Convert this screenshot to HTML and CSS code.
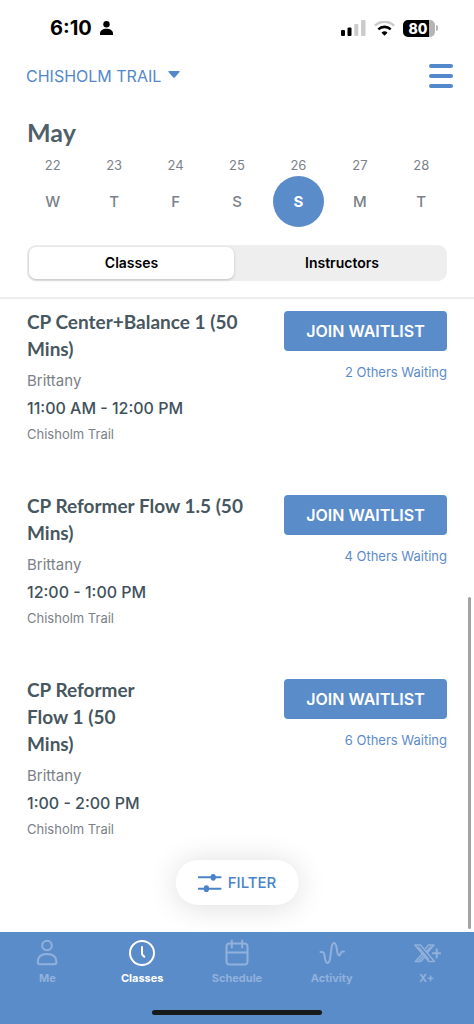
FILE: index.html
```html
<!DOCTYPE html>
<html lang="en">
<head>
<meta charset="utf-8">
<meta name="viewport" content="width=device-width, initial-scale=1">
<title>Classes</title>
<link rel="stylesheet" href="styles.css">
</head>
<body>
<div class="app">
  <div class="status">
    <div class="status-left">
      <span class="clock">6:10</span>
      <svg width="13" height="14" viewBox="0 0 13 14" fill="currentColor" aria-hidden="true"><circle cx="6.5" cy="3.3" r="3.2"/><path d="M0 14V12.500C0 9.500 2.800 7.800 6.500 7.800S13 9.500 13 12.500V14Z"/></svg>
    </div>
    <div class="status-right">
      <svg width="25" height="16" viewBox="0 0 25 16" aria-hidden="true"><rect x="0" y="10" width="4" height="6" rx="1"/><rect x="6.500" y="7.500" width="4" height="8.500" rx="1"/><g fill="#cbcbcb"><rect x="13.300" y="4" width="4" height="12" rx="1"/><rect x="20" y="0" width="4.500" height="16" rx="1"/></g></svg>
      <svg width="21" height="15" viewBox="0 0 21 15" fill="none" stroke-width="2.600" aria-hidden="true"><path d="M1 4.700A13.500 13.500 0 0 1 20 4.700" stroke="#cbcbcb"/><path d="M4.300 8.400A9 9 0 0 1 16.700 8.400" stroke="#000"/><path d="M10.500 14.800 7.500 11.700A4.300 4.300 0 0 1 13.500 11.700Z" fill="#000"/></svg>
      <span class="battery"><span class="battery-level">80</span></span>
    </div>
  </div>

  <header class="topbar">
    <button class="location" type="button">CHISHOLM TRAIL
      <svg width="12" height="10" viewBox="0 0 12 10" fill="currentColor" aria-hidden="true"><path d="M1 0H11Q12.300 0 11.500 1L7 6.300Q6 7.300 5 6.300L.5 1Q-.3 0 1 0Z"/></svg>
    </button>
    <button class="menu" type="button" aria-label="Menu"><span></span><span></span><span></span></button>
  </header>

  <section class="calendar">
    <h1 class="month">May</h1>
    <div class="days">
      <button class="day" type="button"><span class="date">22</span><span class="weekday">W</span></button>
      <button class="day" type="button"><span class="date">23</span><span class="weekday">T</span></button>
      <button class="day" type="button"><span class="date">24</span><span class="weekday">F</span></button>
      <button class="day" type="button"><span class="date">25</span><span class="weekday">S</span></button>
      <button class="day selected" type="button"><span class="date">26</span><span class="weekday">S</span></button>
      <button class="day" type="button"><span class="date">27</span><span class="weekday">M</span></button>
      <button class="day" type="button"><span class="date">28</span><span class="weekday">T</span></button>
    </div>
    <div class="segments">
      <button class="segment active" type="button">Classes</button>
      <button class="segment" type="button">Instructors</button>
    </div>
  </section>

  <main class="classes">
    <article class="class">
      <div class="info">
        <h2 class="title">CP Center+Balance 1 (50<br>Mins)</h2>
        <p class="teacher">Brittany</p>
        <p class="time">11:00 AM - 12:00 PM</p>
        <p class="place">Chisholm Trail</p>
      </div>
      <div class="booking">
        <button class="join" type="button">JOIN WAITLIST</button>
        <p class="waiting">2 Others Waiting</p>
      </div>
    </article>
    <article class="class">
      <div class="info">
        <h2 class="title">CP Reformer Flow 1.5 (50<br>Mins)</h2>
        <p class="teacher">Brittany</p>
        <p class="time">12:00 - 1:00 PM</p>
        <p class="place">Chisholm Trail</p>
      </div>
      <div class="booking">
        <button class="join" type="button">JOIN WAITLIST</button>
        <p class="waiting">4 Others Waiting</p>
      </div>
    </article>
    <article class="class">
      <div class="info">
        <h2 class="title">CP Reformer<br>Flow 1 (50<br>Mins)</h2>
        <p class="teacher">Brittany</p>
        <p class="time">1:00 - 2:00 PM</p>
        <p class="place">Chisholm Trail</p>
      </div>
      <div class="booking">
        <button class="join" type="button">JOIN WAITLIST</button>
        <p class="waiting">6 Others Waiting</p>
      </div>
    </article>
    <div class="scroll-thumb"></div>
    <button class="filter" type="button">
      <svg width="24" height="20" viewBox="0 0 24 20" aria-hidden="true"><path d="M1 4.300H23M1 15.700H23" stroke="currentColor" stroke-width="2" stroke-linecap="round"/><ellipse cx="15.500" cy="4.300" rx="2.700" ry="3.400" fill="currentColor"/><ellipse cx="8.700" cy="15.700" rx="2.700" ry="3.400" fill="currentColor"/></svg>
      FILTER
    </button>
  </main>

  <nav class="tabs">
    <div class="tab-row">
      <a class="tab" href="#me">
        <svg viewBox="0 0 28 28" aria-hidden="true"><circle cx="14" cy="7.500" r="4.800"/><path d="M4.800 24C4.800 19 8 16 14 16S23.400 19 23.400 24Q23.400 26.300 21 26.300H7.200Q4.800 26.300 4.800 24Z"/></svg>
        Me</a>
      <a class="tab current" href="#classes" aria-current="page">
        <svg viewBox="0 0 28 28" aria-hidden="true"><circle cx="14" cy="15" r="12"/><path d="M14 9V15.300Q14 16.500 14.800 17.300L16.300 18.800"/></svg>
        Classes</a>
      <a class="tab" href="#schedule">
        <svg viewBox="0 0 28 28" aria-hidden="true"><rect x="3.500" y="5.500" width="21" height="21" rx="3"/><path d="M3.500 14.500H24.500M8.800 2.500V9.500M19.200 2.500V9.500"/></svg>
        Schedule</a>
      <a class="tab" href="#activity">
        <svg viewBox="0 0 28 28" aria-hidden="true"><path d="M2.500 14H4.500C8 14 5.500 25 9.500 25C14 25 11.800 5 16 5C20 5 18 17.500 21 17.500C23 17.500 22 13.500 24.500 13.500H26"/></svg>
        Activity</a>
      <a class="tab" href="#xplus">
        <svg class="x-icon" viewBox="0 0 28 28" aria-hidden="true"><path d="M1.800 7H7.500L21.500 23.500H15.800ZM21 7H15.500L12.500 10.500M21 7 14.800 14.200M9 16 2.300 23.500H7.800L11.500 19.300M5.500 9.200 15.500 21M17.800 8.800 13.500 13.500M10.500 17.500 6 22.300"/><path class="plus" d="M23.700 11.200V19.400M19.800 15.300H27.400"/></svg>
        X+</a>
    </div>
    <div class="home-indicator"></div>
  </nav>
</div>
</body>
</html>
```
FILE: styles.css
```css
* {
  box-sizing: border-box;
}

body,
h1,
h2,
p {
  margin: 0;
}

body {
  background: #fff;
  color: #7b8188;
  font-family: Inter, "Liberation Sans", sans-serif;
}

button {
  padding: 0;
  border: 0;
  background: none;
  color: inherit;
  font: inherit;
  cursor: pointer;
}

svg {
  flex: none;
}

.app {
  display: flex;
  flex-direction: column;
  min-height: 100vh;
}

.status {
  display: flex;
  align-items: center;
  justify-content: space-between;
  height: 56px;
  padding: 0 36px 0 50px;
  color: #000;
}

.status-left,
.status-right {
  display: flex;
  align-items: center;
}

.status-left {
  gap: 8px;
}

.status-right {
  gap: 8px;
}

.clock {
  font-size: 20px;
  font-weight: 700;
}

.battery {
  display: flex;
  align-items: center;
  gap: 1px;
}

.battery::after {
  content: "";
  width: 2px;
  height: 6px;
  border-radius: 0 2px 2px 0;
  background: #b5b5b5;
}

.battery-level {
  width: 32px;
  padding-right: 2px;
  border-radius: 5px;
  background: linear-gradient(to right, #000 80%, #b5b5b5 80%);
  color: #fff;
  font-size: 14px;
  font-weight: 800;
  line-height: 17px;
  text-align: center;
}

.topbar {
  display: flex;
  align-items: center;
  justify-content: space-between;
  height: 40px;
  padding: 0 21px 0 26px;
  color: #5388cb;
}

.location {
  display: flex;
  align-items: center;
  gap: 7px;
  font-size: 16px;
}

.menu {
  display: grid;
  gap: 6px;
}

.menu span {
  width: 24px;
  height: 4px;
  border-radius: 2px;
  background: #5388cb;
}

.calendar {
  padding: 20px 22px 16px;
  border-bottom: 2px solid #ececec;
}

.month {
  padding: 0 5px;
  color: #50606a;
  font-family: Lato, "Open Sans", sans-serif;
  font-size: 25px;
  font-weight: 700;
  line-height: 32px;
}

.days {
  display: grid;
  grid-template-columns: repeat(7, 1fr);
  padding: 7px 0 18px;
}

.day {
  display: flex;
  flex-direction: column;
  align-items: center;
  gap: 1px;
}

.date {
  font-size: 13px;
  line-height: 20px;
}

.weekday {
  width: 51px;
  border-radius: 50%;
  font-size: 15px;
  font-weight: 500;
  line-height: 51px;
}

.selected .weekday {
  background: #5b8cca;
  color: #fff;
  font-weight: 700;
}

.segments {
  display: grid;
  grid-template-columns: 1fr 1fr;
  margin: 0 5px;
  border-radius: 9px;
  background: #eee;
}

.segment {
  margin: 2px 0;
  border-radius: 7px;
  color: #000;
  font-size: 14px;
  font-weight: 600;
  line-height: 32px;
}

.segment.active {
  margin: 2px 3px 2px 2px;
  background: #fff;
  box-shadow: 0 1px 3px rgba(0, 0, 0, 0.2);
}

.classes {
  position: relative;
  flex: 1;
  padding: 9px 27px 36px;
  overflow: hidden;
}

.class {
  display: flex;
  align-items: flex-start;
  justify-content: space-between;
  margin-bottom: 48px;
}

.title {
  margin-bottom: 8px;
  color: #475760;
  font-family: Lato, "Open Sans", sans-serif;
  font-size: 19px;
  font-weight: 700;
  line-height: 27px;
}

.teacher {
  font-size: 15px;
  line-height: 22px;
}

.time {
  margin: 4px 0;
  color: #40515c;
  font-size: 16px;
  font-weight: 500;
  line-height: 24px;
}

.place {
  font-size: 13px;
  line-height: 20px;
}

.booking {
  padding-top: 3px;
  text-align: right;
}

.join {
  width: 163px;
  border-radius: 4px;
  background: #5b8cca;
  color: #fff;
  font-size: 16px;
  font-weight: 600;
  line-height: 40px;
  text-align: center;
}

.waiting {
  margin-top: 11px;
  color: #5b8cca;
  font-size: 13px;
  line-height: 20px;
}

.scroll-thumb {
  position: absolute;
  right: 3px;
  bottom: 3px;
  width: 3px;
  height: 332px;
  border-radius: 2px;
  background: #a3a3a3;
}

.filter {
  position: absolute;
  bottom: 27px;
  left: 50%;
  display: flex;
  align-items: center;
  gap: 6px;
  height: 45px;
  padding: 0 22px;
  border-radius: 23px;
  background: #fff;
  box-shadow: 0 2px 30px rgba(0, 0, 0, 0.14);
  color: #4a83c8;
  font-size: 15px;
  font-weight: 500;
  transform: translateX(-50%);
}

.tabs {
  display: flex;
  flex-direction: column;
  align-items: center;
  justify-content: space-between;
  height: 92px;
  padding: 6px 0 9px;
  background: #5b8cca;
}

.tab-row {
  display: grid;
  grid-template-columns: repeat(5, 1fr);
  width: 100%;
}

.tab {
  display: flex;
  flex-direction: column;
  align-items: center;
  gap: 4px;
  color: #91b1dc;
  font-size: 11px;
  font-weight: 700;
  line-height: 16px;
  text-decoration: none;
}

.tab svg {
  width: 28px;
  height: 28px;
  fill: none;
  stroke: currentColor;
  stroke-width: 2;
  stroke-linecap: round;
  stroke-linejoin: round;
}

.tab .x-icon {
  stroke-width: 1.4;
}

.x-icon .plus {
  stroke-width: 2;
}

.tab.current {
  color: #fff;
}

.home-indicator {
  width: 170px;
  height: 5px;
  border-radius: 3px;
  background: #17191b;
}
```
